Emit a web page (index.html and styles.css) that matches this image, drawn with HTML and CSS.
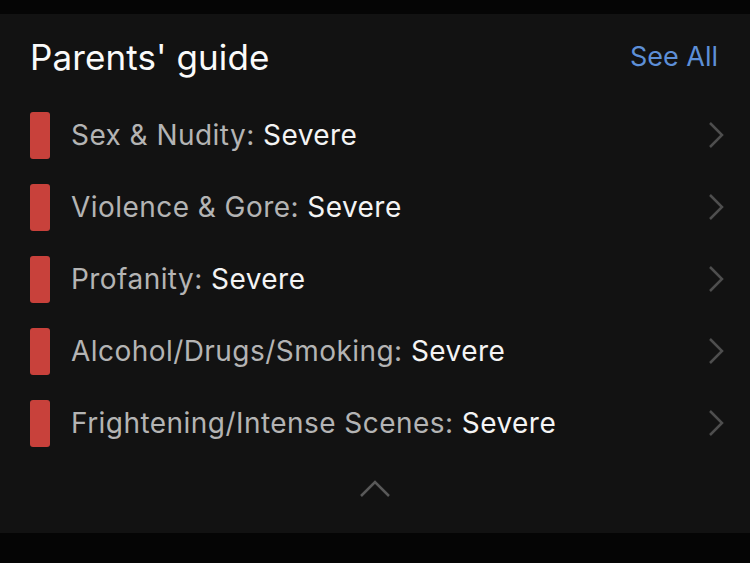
FILE: index.html
```html
<!DOCTYPE html>
<html>
<head>
<meta charset="utf-8">
<link rel="stylesheet" href="styles.css">
</head>
<body>
<div class="screen">
  <div class="topbar"></div>
  <section class="card">
    <header class="head">
      <h1 class="title">Parents' guide</h1>
      <a class="see-all">See All</a>
    </header>
    <ul class="list">
      <li class="row"><span class="bar"></span><span class="label">Sex &amp; Nudity: <b class="val">Severe</b></span><svg class="chev" viewBox="0 0 16 28"><path d="M2 2 L14 14 L2 26" /></svg></li>
      <li class="row"><span class="bar"></span><span class="label">Violence &amp; Gore: <b class="val">Severe</b></span><svg class="chev" viewBox="0 0 16 28"><path d="M2 2 L14 14 L2 26" /></svg></li>
      <li class="row"><span class="bar"></span><span class="label">Profanity: <b class="val">Severe</b></span><svg class="chev" viewBox="0 0 16 28"><path d="M2 2 L14 14 L2 26" /></svg></li>
      <li class="row"><span class="bar"></span><span class="label">Alcohol/Drugs/Smoking: <b class="val">Severe</b></span><svg class="chev" viewBox="0 0 16 28"><path d="M2 2 L14 14 L2 26" /></svg></li>
      <li class="row"><span class="bar"></span><span class="label">Frightening/Intense Scenes: <b class="val">Severe</b></span><svg class="chev" viewBox="0 0 16 28"><path d="M2 2 L14 14 L2 26" /></svg></li>
    </ul>
    <div class="collapse">
      <svg class="up" viewBox="0 0 32 18"><path d="M2 16 L16 2 L30 16" /></svg>
    </div>
  </section>
</div>
</body>
</html>
```
FILE: styles.css
```css
* { box-sizing: border-box; }
html, body { margin: 0; padding: 0; background: #050505; }
body { width: 750px; height: 563px; overflow: hidden; font-family: Inter, Roboto, "Liberation Sans", sans-serif; }
.screen { display: flex; flex-direction: column; height: 563px; }
.topbar { height: 14px; background: #050505; }
.card { background: #121212; height: 519px; display: flex; flex-direction: column; }
.head { height: 85px; display: flex; align-items: center; justify-content: space-between; padding: 0 32px 0 30px; }
.title { margin: 0; font-weight: 400; font-size: 35px; letter-spacing: 0.1px; color: #fafafa; }
.see-all { color: #5d8fd7; font-size: 27px; }
.list { list-style: none; margin: 0; padding: 0; }
.row { height: 72px; display: flex; align-items: center; padding: 0 26px 0 30px; }
.bar { width: 20px; height: 47px; background: #c8413b; border-radius: 3px; flex: none; }
.label { margin-left: 21px; flex: 1; font-size: 28px; letter-spacing: 0.45px; color: #b4b4b4; }
.val { font-weight: 400; color: #f4f4f4; }
.chev { width: 16px; height: 28px; fill: none; stroke: #4e4e4e; stroke-width: 2.5; }
.collapse { height: 60px; display: flex; align-items: center; justify-content: center; }
.up { width: 32px; height: 18px; fill: none; stroke: #595959; stroke-width: 2.5; }
```
